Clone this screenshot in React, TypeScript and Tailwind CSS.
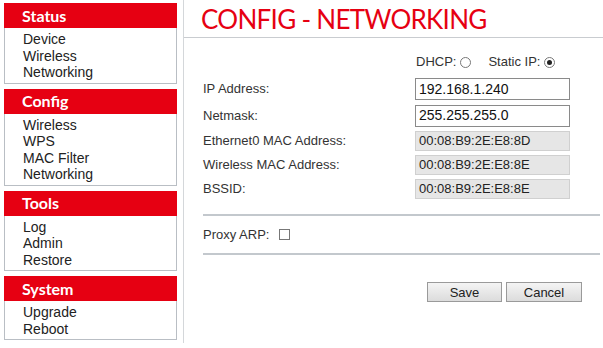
import React from "react";

const MENU = [
  { title: "Status", items: ["Device", "Wireless", "Networking"] },
  { title: "Config", items: ["Wireless", "WPS", "MAC Filter", "Networking"] },
  { title: "Tools", items: ["Log", "Admin", "Restore"] },
  { title: "System", items: ["Upgrade", "Reboot"] },
];

// row heights tuned to the original page's uneven spacing
const FIELDS = [
  { label: "IP Address:", value: "192.168.1.240", editable: true, h: "h-[26px]" },
  { label: "Netmask:", value: "255.255.255.0", editable: true, h: "h-[27px]" },
  { label: "Ethernet0 MAC Address:", value: "00:08:B9:2E:E8:8D", editable: false, h: "h-[24px]" },
  { label: "Wireless MAC Address:", value: "00:08:B9:2E:E8:8E", editable: false, h: "h-[24px]" },
  { label: "BSSID:", value: "00:08:B9:2E:E8:8E", editable: false, h: "h-[24px]" },
];

function Radio({ checked }: { checked?: boolean }) {
  return (
    <span className="inline-flex h-[11px] w-[11px] items-center justify-center rounded-full border border-[#777] bg-white">
      {checked && <span className="h-[5px] w-[5px] rounded-full bg-[#222]" />}
    </span>
  );
}

export default function App() {
  return (
    <div
      className="flex h-[348px] w-[603px] overflow-hidden bg-white text-[#222]"
      style={{ fontFamily: '"Liberation Sans", Arial, sans-serif' }}
    >
      {/* sidebar */}
      <aside className="flex w-[183px] shrink-0 flex-col gap-[5px] pl-[4px] pr-[6px] pt-[3px]">
        {MENU.map((m) => (
          <div key={m.title}>
            <div
              className="flex h-[25px] items-center bg-[#e60012] pl-[18px] text-[16px] font-bold text-white"
              style={{ fontFamily: 'Lato, "Open Sans", sans-serif' }}
            >
              {m.title}
            </div>
            <ul className="border border-t-0 border-[#b9bec4] pb-[2px] pl-[18px] pt-[3px] text-[14px] leading-[16.5px]">
              {m.items.map((it) => (
                <li key={it}>{it}</li>
              ))}
            </ul>
          </div>
        ))}
      </aside>

      {/* main */}
      <main className="flex h-[343px] flex-1 flex-col border-l border-[#d4d7da]">
        <div className="h-[38px] border-b border-[#c9ccd0] pl-[17px]">
          <h1
            className="text-[26px] leading-[38px] tracking-[-0.7px] text-[#e60012]"
            style={{ fontFamily: 'Lato, "Open Sans", sans-serif' }}
          >
            CONFIG - NETWORKING
          </h1>
        </div>

        <div className="pl-[19px] pr-[3px] text-[13px] text-[#333]">
          <div className="mt-[13px] flex h-[22px] items-center pl-[213px]">
            <span className="flex items-center gap-[4px] leading-[16px]">
              DHCP: <Radio />
            </span>
            <span className="ml-[17px] flex items-center gap-[4px] leading-[16px]">
              Static IP: <Radio checked />
            </span>
          </div>

          <div className="mt-[3px] flex flex-col">
            {FIELDS.map((f) => (
              <div key={f.label} className={`flex items-center ${f.h}`}>
                <div className="w-[212px]">{f.label}</div>
                <div
                  className={
                    f.editable
                      ? "flex h-[22px] w-[155px] items-center border border-[#8a8a8a] bg-white pl-[3px] text-[14px] text-[#111]"
                      : "flex h-[20px] w-[155px] items-center border border-[#d0d0d0] bg-[#e6e6e6] pl-[3px] text-[13px] text-[#222]"
                  }
                >
                  {f.value}
                </div>
              </div>
            ))}
          </div>

          <div className="mt-[13px] border-t-2 border-[#c3c8cd]" />
          <div className="flex h-[37px] items-center gap-[10px]">
            <span>Proxy ARP:</span>
            <span className="h-[11px] w-[11px] border border-[#777] bg-white" />
          </div>
          <div className="border-t-2 border-[#c3c8cd]" />

          <div className="flex justify-end gap-[4px] pr-[18px] pt-[27px]">
            <button className="h-[20px] w-[75px] border border-[#9a9a9a] bg-gradient-to-b from-[#f4f4f4] to-[#dcdcdc] text-[13px] text-[#222]">
              Save
            </button>
            <button className="h-[20px] w-[76px] border border-[#9a9a9a] bg-gradient-to-b from-[#f4f4f4] to-[#dcdcdc] text-[13px] text-[#222]">
              Cancel
            </button>
          </div>
        </div>
      </main>
    </div>
  );
}
